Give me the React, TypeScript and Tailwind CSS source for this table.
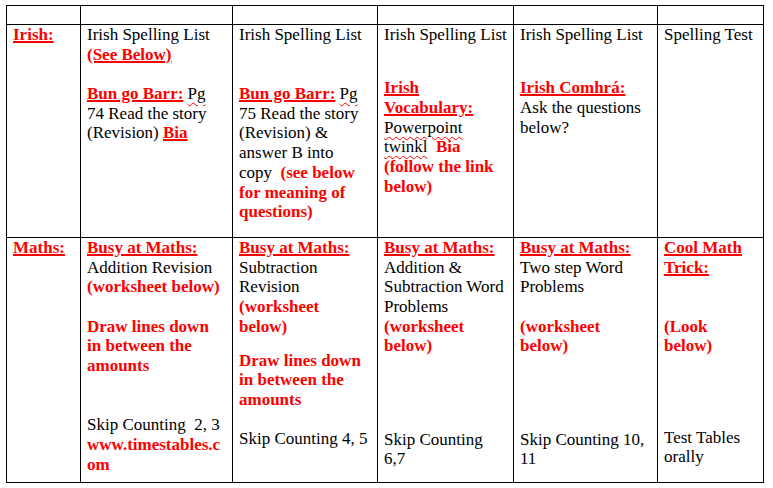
import React from "react";

const Line = ({ children }: { children?: React.ReactNode }) => (
    <div className="h-[19.7px] leading-[19.7px] whitespace-nowrap">{children ?? "\u00a0"}</div>
);

const Gap = ({ h }: { h: string }) => <div className={h} />;

const Red = ({ children }: { children: React.ReactNode }) => (
    <span className="font-bold text-[#ff0000]">{children}</span>
);

const Head = ({ children }: { children: React.ReactNode }) => (
    <span className="font-bold text-[#ff0000] underline decoration-[#ff0000] decoration-2">{children}</span>
);

const Squiggle = ({ children }: { children: React.ReactNode }) => (
    <span className="underline decoration-wavy decoration-[#ff0000] decoration-1 underline-offset-[3px]">{children}</span>
);

const Cell = ({ children }: { children?: React.ReactNode }) => (
    <div className="border-r border-b border-black pl-[6px] flex flex-col overflow-hidden">{children}</div>
);

export default function App() {
    return (
        <div className="w-[773px] h-[488px] bg-white pt-[5px] pl-[6px] font-['Liberation_Serif',serif] text-[17px] text-black">
            <div className="w-[758px] grid grid-cols-[74px_152px_145px_136px_144px_106px] grid-rows-[19px_213px_245px] border-l border-t border-black">
                {/* header row, empty */}
                <Cell />
                <Cell />
                <Cell />
                <Cell />
                <Cell />
                <Cell />

                {/* Irish */}
                <Cell>
                    <Line><Head>Irish:</Head></Line>
                </Cell>
                <Cell>
                    <Line>Irish Spelling List</Line>
                    <Line><Head>(See Below)</Head></Line>
                    <Line />
                    <Line><Head>Bun go Barr:</Head> <Squiggle>Pg</Squiggle></Line>
                    <Line>74 Read the story</Line>
                    <Line>(Revision) <Head>Bia</Head></Line>
                </Cell>
                <Cell>
                    <Line>Irish Spelling List</Line>
                    <Line />
                    <Line />
                    <Line><Head>Bun go Barr:</Head> <Squiggle>Pg</Squiggle></Line>
                    <Line>75 Read the story</Line>
                    <Line>(Revision) &amp;</Line>
                    <Line>answer B into</Line>
                    <Line>copy&nbsp; <Red>(see below</Red></Line>
                    <Line><Red>for meaning of</Red></Line>
                    <Line><Red>questions)</Red></Line>
                </Cell>
                <Cell>
                    <Line>Irish Spelling List</Line>
                    <Gap h="h-[33.6px]" />
                    <Line><Head>Irish</Head></Line>
                    <Line><Head>Vocabulary:</Head></Line>
                    <Line><Squiggle>Powerpoint</Squiggle></Line>
                    <Line><Squiggle>twinkl</Squiggle>&nbsp; <Red>Bia</Red></Line>
                    <Line><Red>(follow the link</Red></Line>
                    <Line><Red>below)</Red></Line>
                </Cell>
                <Cell>
                    <Line>Irish Spelling List</Line>
                    <Gap h="h-[33.6px]" />
                    <Line><Head>Irish Comhrá:</Head></Line>
                    <Line>Ask the questions</Line>
                    <Line>below?</Line>
                </Cell>
                <Cell>
                    <Line>Spelling Test</Line>
                </Cell>

                {/* Maths */}
                <Cell>
                    <Line><Head>Maths:</Head></Line>
                </Cell>
                <Cell>
                    <Line><Head>Busy at Maths:</Head></Line>
                    <Line>Addition Revision</Line>
                    <Line><Red>(worksheet below)</Red></Line>
                    <Line />
                    <Line><Red>Draw lines down</Red></Line>
                    <Line><Red>in between the</Red></Line>
                    <Line><Red>amounts</Red></Line>
                    <Line />
                    <Line />
                    <Line>Skip Counting&nbsp; 2, 3</Line>
                    <Line><Red>www.timestables.c</Red></Line>
                    <Line><Red>om</Red></Line>
                </Cell>
                <Cell>
                    <Line><Head>Busy at Maths:</Head></Line>
                    <Line>Subtraction</Line>
                    <Line>Revision</Line>
                    <Line><Red>(worksheet</Red></Line>
                    <Line><Red>below)</Red></Line>
                    <Gap h="h-[14.3px]" />
                    <Line><Red>Draw lines down</Red></Line>
                    <Line><Red>in between the</Red></Line>
                    <Line><Red>amounts</Red></Line>
                    <Gap h="h-[19.6px]" />
                    <Line>Skip Counting 4, 5</Line>
                </Cell>
                <Cell>
                    <Line><Head>Busy at Maths:</Head></Line>
                    <Line>Addition &amp;</Line>
                    <Line>Subtraction Word</Line>
                    <Line>Problems</Line>
                    <Line><Red>(worksheet</Red></Line>
                    <Line><Red>below)</Red></Line>
                    <Gap h="h-[73.6px]" />
                    <Line>Skip Counting</Line>
                    <Line>6,7</Line>
                </Cell>
                <Cell>
                    <Line><Head>Busy at Maths:</Head></Line>
                    <Line>Two step Word</Line>
                    <Line>Problems</Line>
                    <Line />
                    <Line><Red>(worksheet</Red></Line>
                    <Line><Red>below)</Red></Line>
                    <Gap h="h-[73.6px]" />
                    <Line>Skip Counting 10,</Line>
                    <Line>11</Line>
                </Cell>
                <Cell>
                    <Line><Head>Cool Math</Head></Line>
                    <Line><Head>Trick:</Head></Line>
                    <Line />
                    <Line />
                    <Line><Red>(Look</Red></Line>
                    <Line><Red>below)</Red></Line>
                    <Gap h="h-[71.6px]" />
                    <Line>Test Tables</Line>
                    <Line>orally</Line>
                </Cell>
            </div>
        </div>
    );
}
